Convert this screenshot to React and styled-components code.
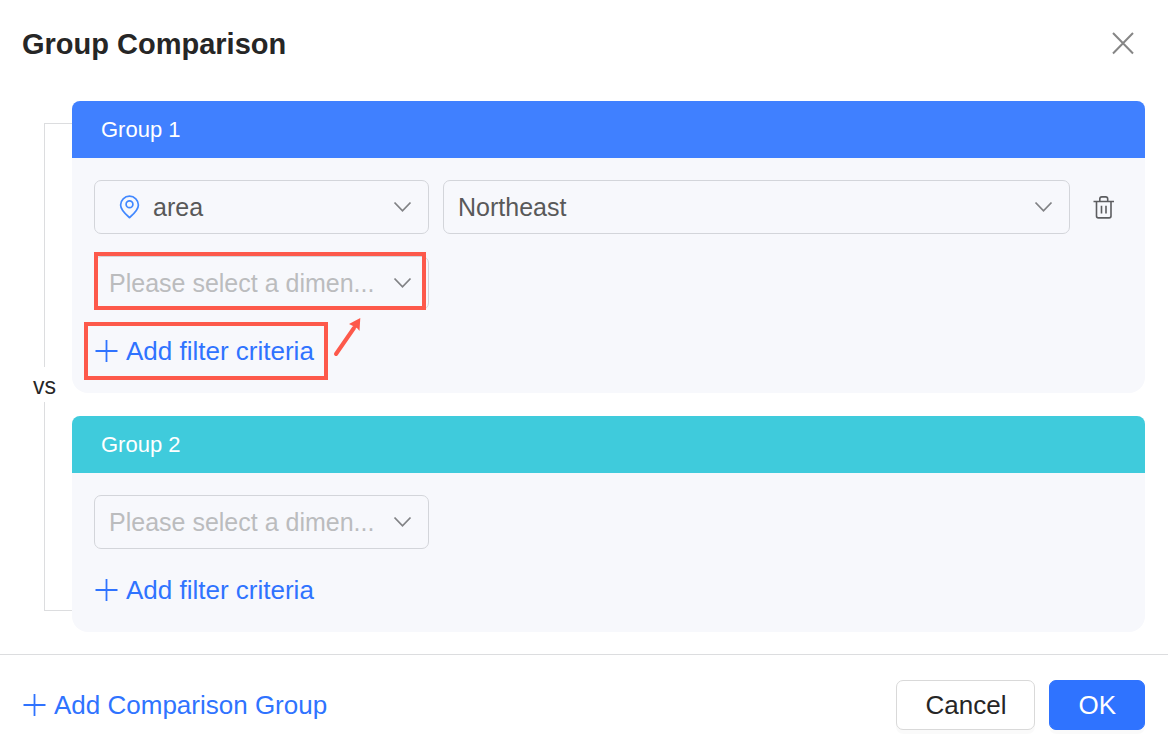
import React from 'react'
import styled, { createGlobalStyle } from 'styled-components'

const GlobalStyle = createGlobalStyle`
    * {
        box-sizing: border-box;
    }

    body {
        margin: 0;
        background: #fff;
        color: #262626;
        font-family: 'Liberation Sans', Arial, sans-serif;
        font-size: 26px;
    }

    button, select {
        font: inherit;
        color: inherit;
    }
`;

const Dialog = styled.div`
    display: flex;
    flex-direction: column;
    min-height: 100vh;
`;

const Header = styled.header`
    display: flex;
    justify-content: space-between;
    align-items: center;
    padding: 22px 23px 35px 22px;
`;

const Title = styled.h1`
    margin: 0;
    font-size: 29px;
    line-height: 44px;
    font-weight: bold;
`;

const IconButton = styled.button`
    display: flex;
    align-items: center;
    justify-content: center;
    width: ${props => props.$width};
    height: 42px;
    padding: 0;
    border: 0;
    background: none;
    cursor: pointer;
`;

const Body = styled.main`
    display: flex;
    padding: 0 23px 22px 22px;
`;

const Rail = styled.div`
    display: flex;
    flex-direction: column;
    flex: 0 0 50px;
    padding: 22px 0 21px;
`;

const RailHalf = styled.div`
    display: flex;
    flex-direction: column;
    flex: 1 1 0;
`;

const RailLine = styled.div`
    flex: 1;
    margin-left: 22px;
    border-left: 1px solid #dcdddf;
    border-top: ${props => props.$edge === 'top' ? '1px solid #dcdddf' : '0'};
    border-bottom: ${props => props.$edge === 'bottom' ? '1px solid #dcdddf' : '0'};
`;

const Versus = styled.span`
    width: 45px;
    padding-top: 3px;
    font-size: 23px;
    line-height: 32px;
    text-align: center;
`;

const Groups = styled.div`
    display: flex;
    flex-direction: column;
    flex: 1;
    gap: 23px;
    min-width: 0;
`;

const Group = styled.section`
    overflow: hidden;
    border-radius: 8px 8px 16px 16px;
    background: #f7f8fc;
`;

const GroupTitle = styled.h2`
    margin: 0;
    padding: 0 29px;
    background: ${props => props.$color};
    color: #fff;
    font-size: 22px;
    line-height: 57px;
    font-weight: normal;
`;

const GroupBody = styled.div`
    display: flex;
    flex-direction: column;
    align-items: flex-start;
    gap: 22px;
    padding: 22px 22px 23px;
`;

const FilterRow = styled.div`
    display: flex;
    align-items: center;
    gap: 14px;
    width: 100%;
`;

// the icons share one grid cell with the select and let clicks through
const SelectBox = styled.div`
    position: relative;
    display: grid;
    align-items: center;
    flex: ${props => props.$grow ? '1 1 0' : '0 0 335px'};
    min-width: 0;

    > * {
        grid-area: 1 / 1;
    }

    > svg {
        pointer-events: none;
    }
`;

const Select = styled.select`
    width: 100%;
    height: 54px;
    padding: 0 42px 0 ${props => props.$hasIcon ? '58px' : '14px'};
    border: 1px solid #d3d5da;
    border-radius: 7px;
    background: transparent;
    color: ${props => props.$empty ? '#bbbcbe' : '#595959'};
    font-size: 25px;
    appearance: none;
    cursor: pointer;
`;

const ChevronSvg = styled.svg`
    justify-self: end;
    margin-right: 17px;
`;

const PinSvg = styled.svg`
    margin-left: 25px;
`;

const AddBox = styled.div`
    position: relative;
`;

const AddButton = styled.button`
    display: flex;
    align-items: center;
    gap: 8px;
    padding: 0;
    border: 0;
    background: none;
    color: #2f73ff;
    line-height: 38px;
    white-space: nowrap;
    cursor: pointer;
`;

const Highlight = styled.div`
    position: absolute;
    inset: ${props => props.$inset};
    border: 4px solid #fd594b;
    pointer-events: none;
`;

const ArrowSvg = styled.svg`
    position: absolute;
    left: 238px;
    top: -16px;
    pointer-events: none;
`;

const Footer = styled.footer`
    display: flex;
    flex: 1;
    align-items: flex-start;
    justify-content: space-between;
    padding: 25px 23px 18px 22px;
    border-top: 1px solid #dcdddf;

    > ${AddButton} {
        line-height: 50px;
    }
`;

const Actions = styled.div`
    display: flex;
    gap: 14px;
`;

const Button = styled.button`
    height: 50px;
    padding: 0 28px;
    border: 1px solid ${props => props.$primary ? '#2f73ff' : '#d9d9d9'};
    border-radius: 7px;
    background: ${props => props.$primary ? '#2f73ff' : '#fff'};
    color: ${props => props.$primary ? '#fff' : '#262626'};
    box-shadow: 0 4px 0 rgba(0, 0, 0, 0.02);
    cursor: pointer;
`;

const CloseIcon = () => (
    <svg width="24" height="24" fill="none" stroke="#868686" strokeWidth="2">
        <path d="M2 1L22 21.5M22 1L2 21.5" />
    </svg>
)

const PlusIcon = () => (
    <svg width="24" height="24" fill="none" stroke="currentColor" strokeWidth="1.8">
        <path d="M12.5 1V23M1.5 12H23.5" />
    </svg>
)

const Chevron = () => (
    <ChevronSvg width="19" height="12" fill="none" stroke="#818285" strokeWidth="1.8">
        <path d="M1.5 1.5L9.5 9.8L17.5 1.5" />
    </ChevronSvg>
)

const Pin = () => (
    <PinSvg width="22" height="24" fill="none" stroke="#4288ff" strokeWidth="1.7">
        <path d="M10.5 22.6C7.6 20.1 1.6 15.2 1.6 10A8.9 8.8 0 0 1 19.4 10C19.4 15.2 13.4 20.1 10.5 22.6Z" strokeLinejoin="round" />
        <circle cx="10.5" cy="9.3" r="3.4" />
    </PinSvg>
)

const TrashIcon = () => (
    <svg width="22" height="24" fill="none" stroke="#5c5d60" strokeWidth="1.6">
        <path d="M0.5 6.5H21" />
        <path d="M6.8 6.5V4Q6.8 1.9 8.9 1.9H12.6Q14.7 1.9 14.7 4V6.5" />
        <path d="M3.5 6.5V21Q3.5 22.9 5.4 22.9H16.1Q18 22.9 18 21V6.5" />
        <path d="M8.5 10.8V18.5M13 10.8V18.5" />
    </svg>
)

const Arrow = () => (
    <ArrowSvg width="32" height="44" viewBox="0 0 32 44">
        <path d="M4 38L22 12" stroke="#fd594b" strokeWidth="4" strokeLinecap="round" />
        <path d="M28.3 2L17 8L21 10L25.5 12.5L27.5 15Z" fill="#fd594b" />
    </ArrowSvg>
)

function SelectField(props) {
    const { label, value, grow, empty, icon, children } = props;

    return (
        <SelectBox $grow={grow}>
            <Select aria-label={label} defaultValue={value} $empty={empty} $hasIcon={Boolean(icon)}>
                <option value={value}>{value}</option>
            </Select>
            {icon}
            <Chevron />
            {children}
        </SelectBox>
    )
}

const groups = [
    {
        name: 'Group 1',
        color: '#4080ff',
        filters: [{ dimension: 'area', value: 'Northeast' }],
        highlighted: true,
    },
    {
        name: 'Group 2',
        color: '#3fcbdc',
        filters: [],
        highlighted: false,
    },
]

function GroupCard(props) {
    const { group } = props;

    return (
        <Group>
            <GroupTitle $color={group.color}>{group.name}</GroupTitle>
            <GroupBody>
                {
                    group.filters.map(filter => (
                        <FilterRow key={filter.dimension}>
                            <SelectField label="Dimension" value={filter.dimension} icon={<Pin />} />
                            <SelectField label="Value" value={filter.value} grow />
                            <IconButton type="button" aria-label="Delete filter" $width="39px">
                                <TrashIcon />
                            </IconButton>
                        </FilterRow>
                    ))
                }
                <FilterRow>
                    <SelectField label="Dimension" value="Please select a dimen..." empty>
                        {group.highlighted && <Highlight $inset="-4px 3px 0 0" />}
                    </SelectField>
                </FilterRow>
                <AddBox>
                    <AddButton type="button"><PlusIcon />Add filter criteria</AddButton>
                    {group.highlighted && <Highlight $inset="-10px -14px -10px -10px" />}
                    {group.highlighted && <Arrow />}
                </AddBox>
            </GroupBody>
        </Group>
    )
}

function App() {
    return (
        <Dialog role="dialog" aria-labelledby="dialog-title">
            <GlobalStyle />
            <Header>
                <Title id="dialog-title">Group Comparison</Title>
                <IconButton type="button" aria-label="Close" $width="44px">
                    <CloseIcon />
                </IconButton>
            </Header>
            <Body>
                <Rail>
                    <RailHalf>
                        <RailLine $edge="top" />
                    </RailHalf>
                    <RailHalf>
                        <Versus>vs</Versus>
                        <RailLine $edge="bottom" />
                    </RailHalf>
                </Rail>
                <Groups>
                    {groups.map(group => <GroupCard key={group.name} group={group} />)}
                </Groups>
            </Body>
            <Footer>
                <AddButton type="button"><PlusIcon />Add Comparison Group</AddButton>
                <Actions>
                    <Button type="button">Cancel</Button>
                    <Button type="button" $primary>OK</Button>
                </Actions>
            </Footer>
        </Dialog>
    )
}

export default App;
